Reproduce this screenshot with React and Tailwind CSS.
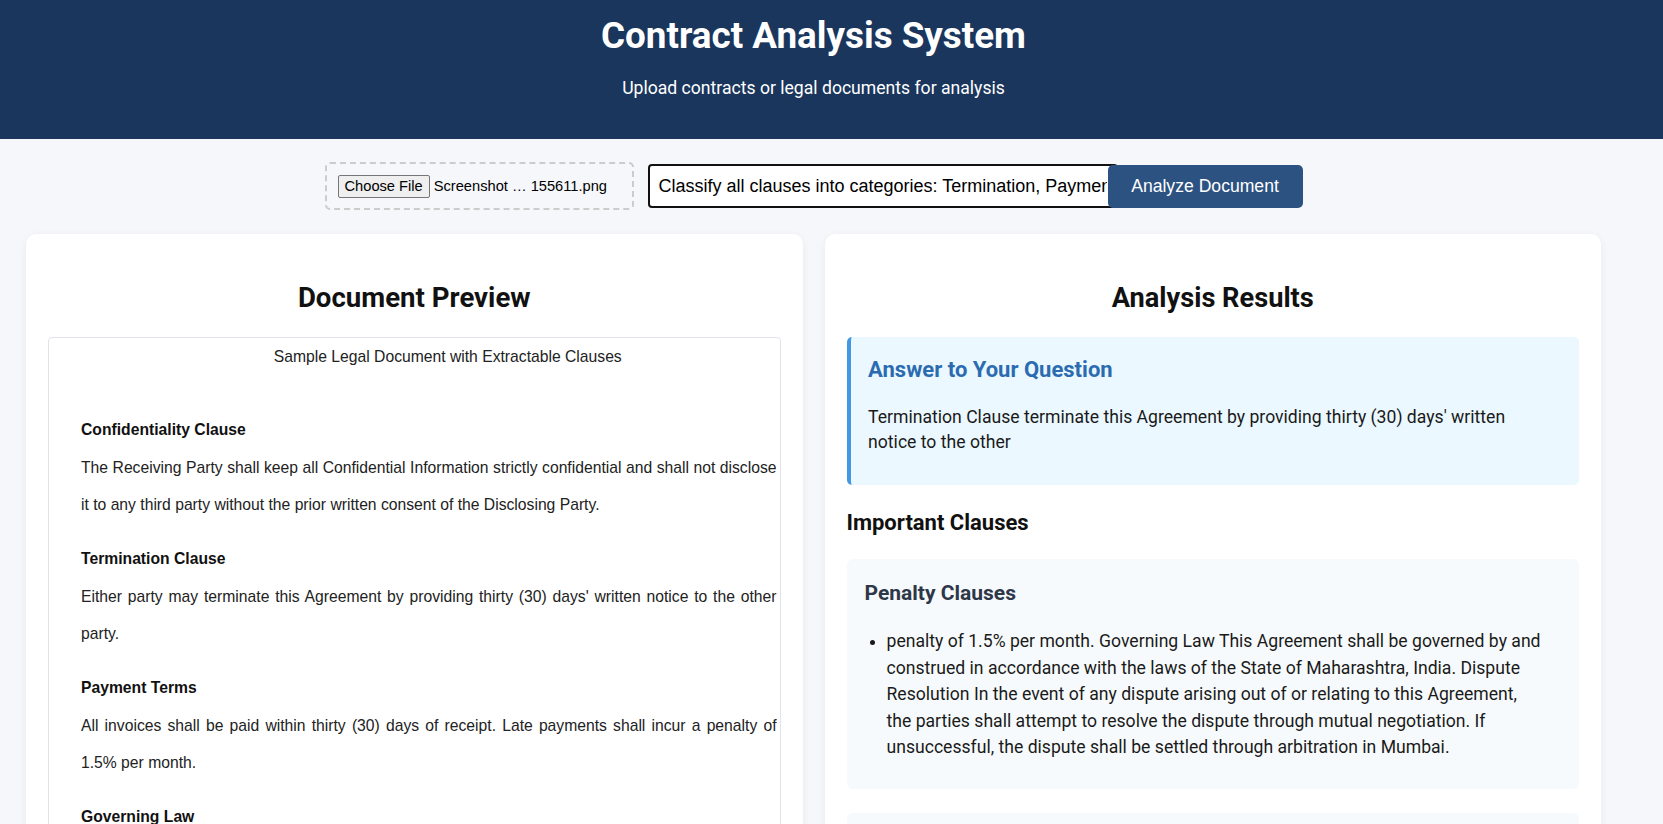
import React from 'react';

const sans = { fontFamily: 'Roboto, "Open Sans", Arial, sans-serif' };
const arial = { fontFamily: '"Liberation Sans", Arial, sans-serif' };

const sections = [
  {
    title: 'Confidentiality Clause',
    body: 'The Receiving Party shall keep all Confidential Information strictly confidential and shall not disclose it to any third party without the prior written consent of the Disclosing Party.',
  },
  {
    title: 'Termination Clause',
    body: "Either party may terminate this Agreement by providing thirty (30) days' written notice to the other party.",
  },
  {
    title: 'Payment Terms',
    body: 'All invoices shall be paid within thirty (30) days of receipt. Late payments shall incur a penalty of 1.5% per month.',
  },
  {
    title: 'Governing Law',
    body: 'This Agreement shall be governed by and construed in accordance with the laws of the State of Maharashtra, India.',
  },
  {
    title: 'Dispute Resolution',
    body: 'In the event of any dispute arising out of or relating to this Agreement, the parties shall attempt to resolve the dispute through mutual negotiation. If unsuccessful, the dispute shall be settled through arbitration in Mumbai.',
  },
];

const DocumentPreview = () => (
  <div className="bg-white rounded-[10px] shadow-[0_2px_8px_rgba(0,0,0,0.06)] px-[22px] pt-[22px] pb-[24px]">
    <h2 className="mt-[26px] mb-[23px] text-center text-[27.6px] leading-[32px] font-bold text-[#111]">Document Preview</h2>
    <div className="border border-[#e2e2ec] rounded-[4px] bg-white overflow-hidden pl-[32px] pr-[3px] pt-[9px] pb-[20px]" style={arial}>
      <div className="text-center pl-[38px] text-[15.7px] leading-[20px] text-[#222]">Sample Legal Document with Extractable Clauses</div>
      <div className="pt-[27px]">
        {sections.map(s => (
          <div key={s.title} className="mt-[26px]">
            <h4 className="text-[15.7px] leading-[20px] font-bold text-[#111]">{s.title}</h4>
            <p className="mt-[9px] text-[15.7px] leading-[37px] text-justify text-[#222]">{s.body}</p>
          </div>
        ))}
      </div>
    </div>
  </div>
);

const AnalysisResults = () => (
  <div className="bg-white rounded-[10px] shadow-[0_2px_8px_rgba(0,0,0,0.06)] px-[22px] pt-[22px] pb-[24px]">
    <h2 className="mt-[26px] mb-[23px] text-center text-[27.2px] leading-[32px] font-bold text-[#111]">Analysis Results</h2>
    <div className="border-l-4 border-[#4299e1] bg-[#ebf8ff] rounded-[5px] pl-[17.6px] pr-[18px] pt-[20px] pb-[30px]">
      <h3 className="text-[22px] leading-[26px] font-bold text-[#2b6cb0]">Answer to Your Question</h3>
      <p className="mt-[22px] pr-[30px] text-[17.6px] leading-[25px] text-[#1a1a1a]">
        Termination Clause terminate this Agreement by providing thirty (30) days' written notice to the other
      </p>
    </div>
    <h3 className="mt-[25px] text-[22px] leading-[26px] font-bold text-[#111]">Important Clauses</h3>
    <div className="mt-[23px] bg-[#f7fafc] rounded-[6px] px-[18px] pt-[21px] pb-[28px]">
      <h4 className="text-[21px] leading-[26px] font-bold text-[#2d3748]">Penalty Clauses</h4>
      <ul className="mt-[22px] pl-[22px] list-disc text-[17.6px] leading-[26.5px] text-[#1a1a1a]">
        <li>
          penalty of 1.5% per month. Governing Law This Agreement shall be governed by and construed in accordance with the laws of the State of Maharashtra, India. Dispute Resolution In the event of any dispute arising out of or relating to this Agreement, the{'\u00a0'}parties shall attempt to resolve the dispute through mutual negotiation. If unsuccessful, the dispute shall be settled through arbitration in Mumbai.
        </li>
      </ul>
    </div>
    <div className="mt-[24px] bg-[#f7fafc] rounded-[6px] px-[18px] pt-[21px] pb-[28px]">
      <h4 className="text-[21px] leading-[26px] font-bold text-[#2d3748]">Termination Clauses</h4>
      <ul className="mt-[22px] pl-[22px] list-disc text-[17.6px] leading-[26.5px] text-[#1a1a1a]">
        <li>Either party may terminate this Agreement by providing thirty (30) days' written notice to the other party.</li>
      </ul>
    </div>
  </div>
);

export default function App() {
  return (
    <div className="min-h-screen bg-[#f5f7fa]" style={sans}>
      <header className="bg-[#1a365d] text-white text-center pt-[15px] pb-[38px] pr-[36px]">
        <h1 className="text-[36.8px] leading-[42px] font-bold">Contract Analysis System</h1>
        <p className="mt-[18px] text-[17.6px] leading-[26px]">Upload contracts or legal documents for analysis</p>
      </header>

      <div className="w-[1627px]">
        <div className="flex justify-center items-center pt-[23px]">
          <div className="w-[309px] h-[48px] flex items-center pl-[11px] border-2 border-dashed border-[#cccccc] rounded-[5px]" style={arial}>
            <span className="h-[23px] px-[6px] flex items-center border border-[#767676] bg-[#efefef] rounded-[2px] text-[14.67px] text-black">Choose File</span>
            <span className="ml-[4px] text-[14.67px] text-black whitespace-nowrap">Screenshot … 155611.png</span>
          </div>
          <input
            readOnly
            value="Classify all clauses into categories: Termination, Payment, Confidentiality, Governing Law"
            className="ml-[14px] w-[470px] h-[44px] border-2 border-[#111] rounded-[4px] pl-[9px] pr-[9px] text-[18px] text-black bg-white outline-none"
            style={arial}
          />
          <button className="-ml-[10px] w-[195px] h-[43px] bg-[#2c5282] text-white text-[17.6px] rounded-[5px]" style={arial}>
            Analyze Document
          </button>
        </div>

        <div className="grid grid-cols-2 gap-[22px] px-[26px] pt-[24px] items-start">
          <DocumentPreview />
          <AnalysisResults />
        </div>
      </div>
    </div>
  );
}
